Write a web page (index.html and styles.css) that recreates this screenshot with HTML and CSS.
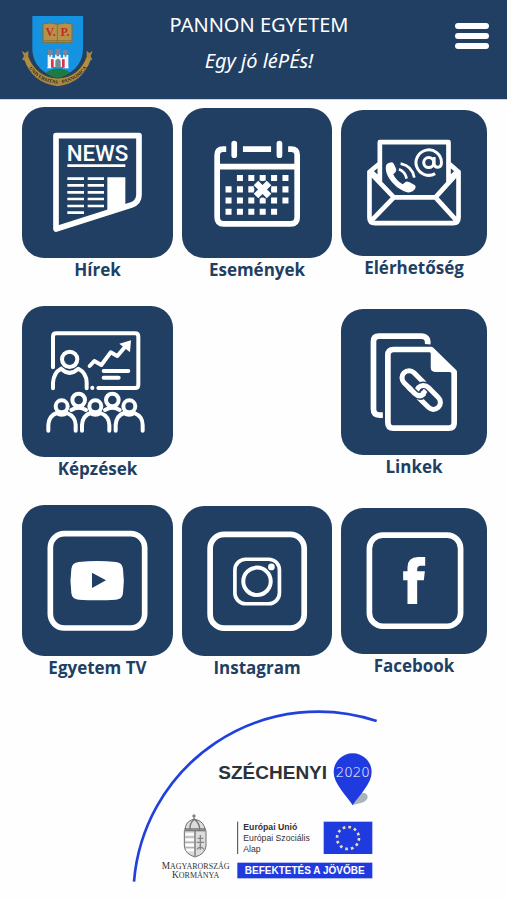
FILE: index.html
```
<!DOCTYPE html>
<html lang="hu">
<head>
    <meta charset="UTF-8">
    <meta name="viewport" content="width=device-width, initial-scale=1.0">
    <title>Pannon Egyetem</title>
    <link rel="stylesheet" href="styles.css">
</head>
<body>
    <header class="header">
        <svg class="logo" viewBox="18 30 216 216" role="img" aria-label="Universitas Pannonica">
            <path d="M52 33H204V130C204 180 170 208 128 219C86 208 52 180 52 130Z" fill="#1593e0"/>
            <path d="M92 203Q128 178 166 203Q150 214 128 220Q108 214 92 203Z" fill="#1c7b45"/>
            <path d="M84 57Q105 50 127 58Q150 50 171 57V112H84Z" fill="#b4924a" stroke="#876b32" stroke-width="3"/>
            <path d="M127 58V112M86 107H170" stroke="#7c622d" stroke-width="2"/>
            <text class="logo-letter" x="107" y="94">V.</text>
            <text class="logo-letter" x="150" y="94">P.</text>
            <g fill="#7c8496">
                <path d="M99 150V135H113V150ZM121 150V131H136V150ZM144 150V135H158V150Z"/>
            </g>
            <path d="M98 186V150H103V155H107V150H112V158H120V149H125V154H132V149H137V158H144V150H149V155H154V150H160V186Z" fill="#f3f3fa"/>
            <path d="M98 186L96 190H112V186ZM144 186V190H162L160 186Z" fill="#fff"/>
            <path d="M108 163H116V188H108ZM141 163H149V188H141Z" fill="#dc3340"/>
            <path d="M121 188V167Q129 156 137 167V188Z" fill="#6d8a96"/>
            <path d="M20 138L31 144L40 137V152C48 184 68 214 128 231C188 214 208 184 215 152V137L223 144L233 138L227 153L232 164L225 166C213 207 180 238 128 244C76 238 42 207 29 166L21 164L27 153Z" fill="#a98742"/>
            <path id="ribbon" d="M31 168C50 213 84 232 128 236C176 232 210 208 226 166" fill="none"/>
            <path d="M34 160C51 201 84 226 128 228C175 226 206 199 221 160" fill="none" stroke="#b28e43" stroke-width="15"/>
            <path d="M40 153C53 190 85 216 128 219C171 216 203 190 215 153" fill="none" stroke="#584721" stroke-width="2"/>
            <text class="logo-motto"><textPath href="#ribbon" startOffset="50%">UNIVERSITAS · PANNONICA</textPath></text>
        </svg>
        <div class="heading">
            <h1 class="title">PANNON EGYETEM</h1>
            <p class="slogan">Egy jó léPÉs!</p>
        </div>
        <button class="menu-button" type="button" aria-label="Menü">
            <span class="bar"></span>
            <span class="bar"></span>
            <span class="bar"></span>
        </button>
    </header>

    <main class="menu">
        <a class="item" href="#hirek">
            <svg class="tile" viewBox="20 22 453 453" aria-hidden="true">
                <path class="line" d="M122 108H371V285Q371 308 348 316L122 388Z"/>
                <text class="news" x="154" y="183">NEWS</text>
                <path class="thin" d="M156 198H330M156 237H206M156 257H206M156 278H206M156 298H206M156 319H206M156 339H206M217 237H266M217 257H266M217 278H266M217 298H266M217 319H266"/>
                <path class="solid" d="M276 233H330V320L276 337Z"/>
            </svg>
            <span class="label">Hírek</span>
        </a>
        <a class="item" href="#esemenyek">
            <svg class="tile" viewBox="22 24 448 448" aria-hidden="true">
                <path class="line flat" d="M154 147H145Q127 147 127 165V350Q127 370 147 370H346Q366 370 366 350V165Q366 147 348 147H339M204 147H288M127 199H366"/>
                <path class="line" d="M178 130V165M313 130V165"/>
                <path class="dots" d="M186 233H340"/>
                <path class="dots" d="M152 267H340"/>
                <path class="dots" d="M152 300H340"/>
                <path class="dots" d="M152 334H306"/>
                <path d="M245 250L280 285M280 250L245 285" stroke="#213f63" stroke-width="28"/>
                <path d="M243 248L282 287M282 248L243 287" stroke="#fff" stroke-width="19"/>
            </svg>
            <span class="label">Események</span>
        </a>
        <a class="item" href="#elerhetoseg">
            <svg class="tile" viewBox="19 31 436 436" aria-hidden="true">
                <path class="line envelope" d="M104 216V352Q104 369 121 369H353Q370 369 370 352V216L301 292H177ZM109 362L177 292M365 362L301 292M104 216L135 190M370 216L340 190M135 246V127H340V246M112 218L135 240M362 218L340 240"/>
                <path class="solid" d="M153 200Q154 188 171 187Q177 188 184 209Q185 215 175 223Q183 241 203 253L213 245Q218 243 239 255Q244 259 241 265Q234 278 219 277C183 270 149 228 153 200Z"/>
                <path d="M192 208Q210 214 215 236M197 191Q232 198 238 233" fill="none" stroke="#fff" stroke-width="8"/>
                <circle cx="281" cy="188" r="15" fill="none" stroke="#fff" stroke-width="9"/>
                <path d="M297 171V191Q298 202 308 202Q319 202 319 187A38 38 0 1 0 300 221" fill="none" stroke="#fff" stroke-width="9"/>
            </svg>
            <span class="label">Elérhetőség</span>
        </a>
        <a class="item" href="#kepzesek">
            <svg class="tile" viewBox="20 19 453 453" aria-hidden="true">
                <g class="line people">
                    <path d="M113 203V111Q113 101 123 101H359Q369 101 369 111V255Q369 265 359 265H249M231 264V265"/>
                    <circle cx="163" cy="179" r="23"/>
                    <path d="M113 266V249Q115 219 137 207Q163 232 189 207Q214 220 214 249V266"/>
                    <path d="M223 199L237 184L258 196L286 158L306 169L329 142M265 214H339M265 234H310"/>
                    <circle cx="139" cy="320" r="18"/>
                    <circle cx="190" cy="301" r="19"/>
                    <circle cx="240" cy="320" r="18"/>
                    <circle cx="291" cy="301" r="19"/>
                    <circle cx="342" cy="320" r="18"/>
                    <path d="M99 393V376Q101 348 124 340Q139 350 155 340Q180 350 181 376V393M200 393V376Q202 348 225 340Q240 350 256 340Q281 350 282 376V393M301 393V376Q303 348 326 340Q341 350 357 340Q382 350 382 376V393M168 331Q190 318 212 331M269 331Q291 318 313 331"/>
                </g>
                <path class="solid" d="M312 132L347 122L344 158Z"/>
            </svg>
            <span class="label">Képzések</span>
        </a>
        <a class="item last" href="#linkek">
            <svg class="tile" viewBox="19 28 436 436" aria-hidden="true">
                <path class="line flat" d="M278 133Q280 109 258 109H132Q116 109 116 125V327Q116 345 134 345H144"/>
                <path class="line" d="M176 149H288L357 216V368Q357 384 341 384H176Q159 384 159 367V166Q159 149 176 149Z"/>
                <path class="solid" d="M287 149L362 216H300Q287 216 287 203Z"/>
                <g fill="none" stroke="#fff" stroke-width="15">
                    <rect x="195" y="227" width="84" height="42" rx="21" transform="rotate(45 237 248)"/>
                    <rect x="238" y="271" width="84" height="42" rx="21" transform="rotate(45 280 292)" stroke="#213f63" stroke-width="23"/>
                    <rect x="238" y="271" width="84" height="42" rx="21" transform="rotate(45 280 292)"/>
                    <path d="M229 270L239 280Q252 292 263 285" stroke="#213f63" stroke-width="24"/>
                    <path d="M220 261L239 280Q254 294 268 280"/>
                </g>
            </svg>
            <span class="label">Linkek</span>
        </a>
        <a class="item" href="#tv">
            <svg class="tile" viewBox="20 16 453 453" aria-hidden="true">
                <rect class="frame" x="105" y="102" width="283" height="283" rx="42"/>
                <path class="solid" d="M190 187Q246 181 302 187Q321 189 323 208Q328 243 323 280Q321 299 302 300Q246 304 190 300Q170 299 168 280Q163 243 168 208Q170 189 190 187Z"/>
                <path d="M230 219V265L272 242Z" fill="#213f63"/>
            </svg>
            <span class="label">Egyetem TV</span>
        </a>
        <a class="item" href="#instagram">
            <svg class="tile" viewBox="22 19 448 448" aria-hidden="true">
                <rect class="frame" x="106" y="104" width="281" height="280" rx="42"/>
                <rect x="180" y="178" width="133" height="133" rx="32" fill="none" stroke="#fff" stroke-width="11"/>
                <circle cx="246" cy="244" r="41" fill="none" stroke="#fff" stroke-width="12"/>
                <circle cx="289" cy="201" r="14" fill="#213f63"/>
                <circle cx="289" cy="201" r="10" fill="#fff"/>
            </svg>
            <span class="label">Instagram</span>
        </a>
        <a class="item" href="#facebook">
            <svg class="tile" viewBox="498 27 437 437" aria-hidden="true">
                <rect class="frame" x="583" y="108" width="273" height="273" rx="40"/>
                <path class="solid" d="M697 314V243H684V216H697V205Q697 175 729 174H750V200H737Q726 200 726 211V216H749L746 243H726V314Z"/>
            </svg>
            <span class="label">Facebook</span>
        </a>
    </main>

    <footer class="footer">
        <svg class="sponsor" viewBox="0 0 780 570" role="img" aria-label="Széchenyi 2020">
            <path d="M27 542A555 555 0 0 1 755 60" fill="none" stroke="#2140dc" stroke-width="8"/>
            <text class="program" x="280" y="233">SZÉCHENYI</text>
            <path d="M683 311L696 277Q727 270 728 288Q726 306 683 311Z" fill="#a9b4bb"/>
            <path d="M683 313C665 284 626 249 626 213A57 56 0 0 1 740 213C740 249 701 284 683 313Z" fill="#1f3be0"/>
            <text class="year" x="683" y="228">2020</text>

            <g fill="#dcdcdc" stroke="#707070" stroke-width="3">
                <path d="M178 389H243V435Q241 459 210 468Q180 459 178 435Z"/>
                <path d="M181 389Q178 361 208 354Q240 361 240 389Z"/>
            </g>
            <path d="M181 400H208M181 416H208M181 432H208M184 447H208" stroke="#fff" stroke-width="7"/>
            <path d="M180 408H208M180 424H208M181 440H208" stroke="#aaa" stroke-width="3"/>
            <path d="M210 389V466M195 388Q193 366 208 355Q225 366 224 388M178 384H243M207 340V355M202 345H212" fill="none" stroke="#777" stroke-width="4"/>
            <path d="M226 402V446M218 412H235M215 424H237M216 445Q226 432 237 445" fill="none" stroke="#858585" stroke-width="4"/>
            <text class="government" x="212" y="504"><tspan class="initial">M</tspan>AGYARORSZÁG</text>
            <text class="government" x="212" y="531"><tspan class="initial">K</tspan>ORMÁNYA</text>

            <path d="M338 362V459" stroke="#444" stroke-width="3"/>
            <text class="fund bold" x="355" y="388">Európai Unió</text>
            <text class="fund" x="355" y="420">Európai Szociális</text>
            <text class="fund" x="355" y="454">Alap</text>
            <rect x="596" y="362" width="146" height="97" fill="#1f3be0"/>
            <circle cx="669" cy="411" r="33" fill="none" stroke="#e4dfae" stroke-width="8" stroke-dasharray="8 9.28" />
            <rect x="337" y="485" width="405" height="47" fill="#1f3be0"/>
            <text class="motto" x="539" y="520">BEFEKTETÉS A JÖVŐBE</text>
        </svg>
    </footer>
</body>
</html>
```
FILE: styles.css
```
* {
    box-sizing: border-box;
}
body {
    margin: 0;
    background: #fefefe;
    color: #213f63;
    font-family: "Open Sans", "Noto Sans", sans-serif;
}
.header {
    display: grid;
    grid-template-columns: 80px 1fr 72px;
    align-items: start;
    padding: 7px 18px 12px 21px;
    background: #213f63;
    border-bottom: 1px solid #c9d8ea;
    color: white;
}
.logo {
    width: 72px;
    margin-top: 8px;
}
.logo-letter {
    font: bold 36px "Liberation Serif", serif;
    fill: #c42a22;
    text-anchor: middle;
}
.logo-motto {
    font: bold 15px "Liberation Serif", serif;
    fill: #251f18;
    text-anchor: middle;
}
.heading {
    font-family: "Noto Sans", "Open Sans", sans-serif;
    text-align: center;
}
.title, .slogan {
    margin: 0;
    font-size: 20px;
    font-weight: 400;
    line-height: 36px;
}
.slogan {
    font-style: italic;
}
.menu-button {
    display: flex;
    flex-direction: column;
    gap: 4px;
    justify-self: end;
    width: 34px;
    margin-top: 16px;
    padding: 0;
    border: none;
    background: none;
    cursor: pointer;
}
.bar {
    width: 100%;
    height: 6px;
    border-radius: 3px;
    background: white;
}
.menu {
    display: grid;
    grid-template-columns: 151fr 150fr 146fr;
    gap: 24px 9px;
    align-items: center;
    padding: 7px 20px 0 22px;
}
.item {
    display: flex;
    flex-direction: column;
    color: inherit;
    text-align: center;
    text-decoration: none;
}
.last {
    grid-column: 3;
}
.tile {
    display: block;
    width: 100%;
    border-radius: 22px;
    background: #213f63;
}
.label {
    font-size: 17px;
    font-weight: 700;
    line-height: 24px;
}
.line {
    fill: none;
    stroke: white;
    stroke-width: 17px;
    stroke-linecap: round;
    stroke-linejoin: round;
}
.flat {
    stroke-linecap: butt;
}
.envelope {
    stroke-width: 14px;
}
.people {
    stroke-width: 12px;
}
.thin {
    stroke: white;
    stroke-width: 8px;
}
.dots {
    stroke: white;
    stroke-width: 18px;
    stroke-dasharray: 18 16;
}
.solid {
    fill: white;
}
.frame {
    fill: none;
    stroke: white;
    stroke-width: 17px;
}
.news {
    font: 500 67px Roboto, sans-serif;
    fill: white;
}
.footer {
    display: flex;
    justify-content: center;
    padding: 21px 0 0 3px;
}
.sponsor {
    width: 260px;
}
.program {
    font: bold 57px "Liberation Sans", sans-serif;
    fill: #2c3235;
}
.year {
    font: 200 40px "DejaVu Sans", sans-serif;
    fill: white;
    text-anchor: middle;
}
.government {
    font: 24px "Liberation Serif", serif;
    fill: #333;
    text-anchor: middle;
}
.initial {
    font-size: 28px;
}
.fund {
    font: 26px "Liberation Sans", sans-serif;
    fill: #333;
}
.bold {
    font-weight: bold;
}
.motto {
    font: bold 30px "Liberation Sans", sans-serif;
    fill: white;
    text-anchor: middle;
}
```
